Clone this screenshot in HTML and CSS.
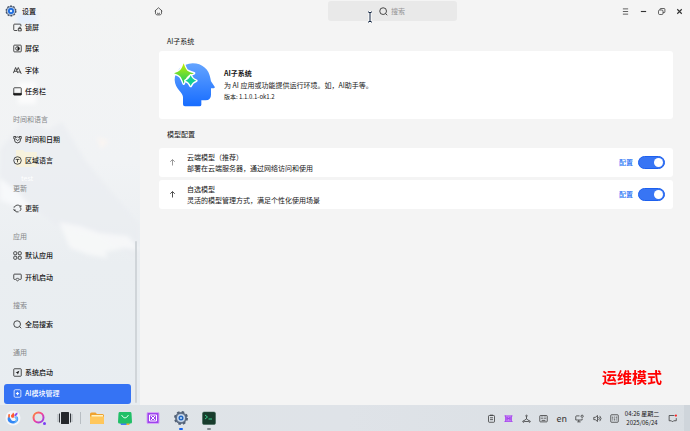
FILE: index.html
```html
<!DOCTYPE html>
<html lang="zh-CN">
<head>
<meta charset="utf-8">
<meta name="viewport" content="width=device-width, initial-scale=1">
<title>设置</title>
<link rel="stylesheet" href="styles.css">
</head>
<body>
<div class="window">
  <aside class="sidebar">
    <svg class="wallpaper" viewBox="0 0 140 405" preserveAspectRatio="none" aria-hidden="true">
      <defs><filter id="soft"><feGaussianBlur stdDeviation="2"/></filter></defs>
      <g filter="url(#soft)">
        <path d="M0 150L25 118L48 130L62 122L85 160L110 190L140 225V262L100 235L60 228L0 180Z" fill="#e9edf1" opacity=".7"/>
        <path d="M0 178L18 192L38 215L0 200Z" fill="#fbfcfd" opacity=".7"/>
        <path d="M59 222L80 226L100 233L128 236L140 250L125 248L105 252L108 258L90 255L70 248Z" fill="#f9fafa" opacity=".8"/>
        <path d="M18 82h18v22H18z" fill="#fff" opacity=".7"/>
        <path d="M17 12h20v12H17z" fill="#e4eefc"/>
        <path d="M97 137l12 4l-8 8z" fill="#faf5f2"/>
      </g>
      <path d="M16 150h7l2 2h12v15H16z" fill="#fbf3d5" opacity=".75"/>
    </svg>
    <header class="brand">
      <svg class="brand-icon" viewBox="0 0 24 24" aria-hidden="true"><circle cx="12" cy="12" r="9.500" fill="#56657a" stroke="#45536a" stroke-width="3" stroke-dasharray="3.700 2.270"/><circle cx="12" cy="12" r="8" fill="#b9cae1"/><circle cx="12" cy="12" r="6" fill="#1769e0"/><circle cx="12" cy="12" r="2.500" fill="#d9edff"/></svg>
      <h1>设置</h1>
    </header>
    <nav class="nav">
      <a class="item" href="#lock"><svg class="icon" viewBox="0 0 24 24"><path d="M11 20H4a2 2 0 0 1-2-2V5a2 2 0 0 1 2-2h15a2 2 0 0 1 2 2v4M14 15h8v6h-8zM16 15v-2a2 2 0 0 1 4 0v2"/></svg>锁屏</a>
      <a class="item" href="#saver"><svg class="icon" viewBox="0 0 24 24"><rect x="2" y="3" width="20" height="18" rx="2"/><circle cx="12" cy="12" r="5"/><path d="M12 7a5 5 0 0 1 0 10z" fill="currentColor" stroke="none"/></svg>屏保</a>
      <a class="item" href="#font"><svg class="icon" viewBox="0 0 24 24"><path d="M1 19L7 4l6 15M3 14h8M11 11l3-7l8 17M13 16h7"/></svg>字体</a>
      <a class="item" href="#taskbar"><svg class="icon" viewBox="0 0 24 24"><rect x="2" y="2" width="20" height="19" rx="2"/><path d="M2 17h20v4H2z" fill="currentColor"/></svg>任务栏</a>
      <h2 class="group">时间和语言</h2>
      <a class="item" href="#time"><svg class="icon" viewBox="0 0 24 24"><circle cx="12" cy="13" r="8"/><path d="M2 9V4h6M16 4h6v5M8 11l4 4l5-4M2 9l3 3M22 9l-3 3"/></svg>时间和日期</a>
      <a class="item" href="#region"><svg class="icon" viewBox="0 0 24 24"><circle cx="12" cy="12" r="10"/><path d="M7 9h10M12 9v8"/></svg>区域语言</a>
      <h2 class="group">更新</h2>
      <a class="item" href="#update"><svg class="icon" viewBox="0 0 24 24"><path d="M4 8a9 9 0 0 1 15-2M21 10a9 9 0 0 1-3 9M15 21a9 9 0 0 1-11-5M2 13l1 4l4-1M21 3v5h-4M3 10V7"/></svg>更新</a>
      <h2 class="group">应用</h2>
      <a class="item" href="#default"><svg class="icon" viewBox="0 0 24 24"><rect x="2" y="2" width="8" height="8" rx="2"/><rect x="14" y="2" width="8" height="8" rx="2"/><rect x="2" y="14" width="8" height="8" rx="2"/><rect x="14" y="14" width="8" height="8" rx="2"/></svg>默认应用</a>
      <a class="item" href="#startup"><svg class="icon" viewBox="0 0 24 24"><path d="M7 17H4a2 2 0 0 1-2-2V5a2 2 0 0 1 2-2h16a2 2 0 0 1 2 2v10a2 2 0 0 1-2 2h-3M7 17l5 4l5-4M9 16l3-3l3 3"/></svg>开机启动</a>
      <h2 class="group">搜索</h2>
      <a class="item" href="#search"><svg class="icon" viewBox="0 0 24 24"><circle cx="11" cy="11" r="9"/><path d="M18 18l4 4"/></svg>全局搜索</a>
      <h2 class="group">通用</h2>
      <a class="item" href="#boot"><svg class="icon" viewBox="0 0 24 24"><rect x="2" y="2" width="20" height="20" rx="2"/><path d="M7 12l10-5l-4 10l-2-4z" fill="currentColor" stroke="none"/></svg>系统启动</a>
      <a class="item active" href="#ai" aria-current="page"><svg class="icon" viewBox="0 0 24 24"><rect x="3" y="2" width="18" height="20" rx="3"/><path d="M12 7l2 3l3 2l-3 2l-2 3l-2-3l-3-2l3-2z" fill="currentColor" stroke="none"/></svg>AI模块管理</a>
    </nav>
    <span class="scrollbar"></span>
    <span class="desktop-label" aria-hidden="true">test</span>
  </aside>

  <main class="main">
    <header class="toolbar">
      <button class="tool" aria-label="主页"><svg class="icon" viewBox="0 0 24 24"><path d="M2 11L12 2l10 9M4 9v9l3 3h10l3-3V9M8 16q4 4 8 0"/></svg></button>
      <label class="search">
        <svg class="icon" viewBox="0 0 24 24"><circle cx="11" cy="11" r="9"/><path d="M18 18l4 4"/></svg>
        <input type="search" placeholder="搜索" aria-label="搜索">
      </label>
      <div class="controls">
        <button class="tool" aria-label="菜单"><svg class="icon" viewBox="0 0 24 24"><path d="M5 5h14M5 12h14M5 19h14"/></svg></button>
        <button class="tool" aria-label="最小化"><svg class="icon" viewBox="0 0 24 24"><path d="M5 12h14" stroke-width="3"/></svg></button>
        <button class="tool" aria-label="还原"><svg class="icon" viewBox="0 0 24 24"><rect x="4" y="8" width="12" height="12" rx="3"/><path d="M8 8V6a2 2 0 0 1 2-2h9a2 2 0 0 1 2 2v7a2 2 0 0 1-2 2h-3"/></svg></button>
        <button class="tool" aria-label="关闭"><svg class="icon" viewBox="0 0 24 24"><path d="M6 6l12 12M18 6L6 18" stroke-width="3"/></svg></button>
      </div>
    </header>
    <section class="section">
      <h2>AI子系统</h2>
      <div class="card intro">
        <svg class="head" viewBox="28 24 126 132" aria-hidden="true">
          <defs>
            <linearGradient id="blue" x1="0" y1="0" x2="0" y2="1"><stop offset="0" stop-color="#64a4ff"/><stop offset="1" stop-color="#176cff"/></linearGradient>
            <linearGradient id="green" x1="0" y1="0" x2="0" y2="1"><stop offset="0" stop-color="#c5ef00"/><stop offset="1" stop-color="#19ca61"/></linearGradient>
          </defs>
          <path d="M84 25C113 25 133 44 137 69L139 79L150 95Q152 99 147 100H139V119Q139 135 123 136H110V149Q110 154 104 154H61Q55 154 55 148V126C54 111 31 102 30 75C29 51 54 25 84 25Z" fill="url(#blue)"/>
          <path d="M57 25Q63 43 68 47Q72 50 88 55Q72 61 68 65Q63 69 57 86Q51 69 46 64Q42 60 28 55Q42 50 46 46Q51 42 57 25Z" fill="url(#green)" stroke="#fff" stroke-width="8" stroke-linejoin="round" paint-order="stroke"/>
          <path d="M78 61Q82 73 95 77Q82 81 78 93Q74 81 62 77Q74 73 78 61Z" fill="#16cf92" stroke="#fff" stroke-width="8" stroke-linejoin="round" paint-order="stroke"/>
        </svg>
        <div class="copy">
          <h3>AI子系统</h3>
          <p>为 AI 应用或功能提供运行环境。如，AI助手等。</p>
          <p class="version">版本: 1.1.0.1-ok1.2</p>
        </div>
      </div>
    </section>
    <section class="section">
      <h2>模型配置</h2>
      <div class="models">
        <div class="card model">
          <button class="arrow muted" aria-label="上移云端模型"><svg class="icon" viewBox="0 0 24 24"><path d="M12 20V5M6 10l6-6l6 6"/></svg></button>
          <div class="model-copy"><label for="cloud">云端模型（推荐）</label><p>部署在云端服务器，通过网络访问和使用</p></div>
          <a class="configure" href="#cloud-config">配置</a>
          <input class="switch" id="cloud" type="checkbox" role="switch" checked>
        </div>
        <div class="card model">
          <button class="arrow" aria-label="上移自选模型"><svg class="icon" viewBox="0 0 24 24"><path d="M12 20V5M6 10l6-6l6 6"/></svg></button>
          <div class="model-copy"><label for="custom">自选模型</label><p>灵活的模型管理方式，满足个性化使用场景</p></div>
          <a class="configure" href="#custom-config">配置</a>
          <input class="switch" id="custom" type="checkbox" role="switch" checked>
        </div>
      </div>
    </section>
  </main>
</div>

<footer class="taskbar">
  <div class="pinned">
    <button class="app" aria-label="开始"><svg viewBox="0 0 32 32"><circle cx="16" cy="16" r="15" fill="#f4f6f9"/><path d="M9 9C0 20 9 28 17 27C27 26 29 15 23 12C27 22 15 25 12 19C10 16 8 13 9 9Z" fill="#3287f5"/><path d="M23 12C28 18 24 26 17 27C24 22 22 18 18 14Z" fill="#70bdfb"/><path d="M13 15C10 9 15 10 16 5C21 10 18 12 17 16Z" fill="#ff5b2f"/><path d="M19 13C18 9 21 6 25 5C26 9 23 12 19 13Z" fill="#8c50ed"/><path d="M6 9l4-1v6l-3 2z" fill="#ff7040"/></svg></button>
    <button class="app" aria-label="搜索"><svg viewBox="0 0 32 32"><defs><linearGradient id="ring" x1="0" y1="0" x2="1" y2="1"><stop stop-color="#ff8d2c"/><stop offset=".5" stop-color="#f13e9d"/><stop offset="1" stop-color="#8641f6"/></linearGradient></defs><circle cx="15" cy="15" r="10" fill="none" stroke="url(#ring)" stroke-width="4"/><circle cx="27" cy="27" r="3" fill="#7b3df5"/></svg></button>
    <button class="app" aria-label="多任务"><svg viewBox="0 0 32 32"><rect x="8" y="4" width="16" height="24" rx="1" fill="#24282c"/><path d="M5 7v18M27 7v18" stroke="#30353a" stroke-width="2"/><path d="M2 8v16M30 8v16" stroke="#7b8085" stroke-width="1"/></svg></button>
  </div>
  <span class="divider"></span>
  <div class="pinned apps">
    <button class="app" aria-label="文件管理"><svg viewBox="0 0 32 32"><path d="M2 8q0-3 3-3h8l3 3h11q3 0 3 3v15q0 2-2 2H4q-2 0-2-2z" fill="#efa22e"/><path d="M5 10h23v7H5z" fill="#fff2c3"/><path d="M2 13h28v13q0 2-2 2H4q-2 0-2-2z" fill="#ffc75b"/></svg></button>
    <button class="app" aria-label="软件商店"><svg viewBox="0 0 32 32"><path d="M6 25h20l-2 5H8z" fill="#487df7"/><path d="M19 25h7l-2 5h-5z" fill="#ffb22e"/><path d="M5 4h22q2 0 2 3l1 17q0 3-3 3H5q-3 0-3-3L3 7q0-3 2-3z" fill="#20bf67"/><path d="M9 10q7 12 14 0" fill="none" stroke="#dcffe8" stroke-width="2"/></svg></button>
    <button class="app" aria-label="截图"><svg viewBox="0 0 32 32"><rect x="4" y="5" width="24" height="22" rx="2" fill="#9d43ed" stroke="#d6a4f7" stroke-width="2"/><path d="M9 10h14v12H9zM12 12l8 8M20 12l-8 8" fill="none" stroke="#fff" stroke-width="2"/></svg></button>
    <button class="app running current" aria-label="设置"><svg viewBox="0 0 32 32"><circle cx="16" cy="16" r="12" fill="#64748a" stroke="#536175" stroke-width="4" stroke-dasharray="5 4.420"/><circle cx="16" cy="16" r="8" fill="#c8d8ea"/><circle cx="16" cy="16" r="5" fill="#2166c4"/><circle cx="16" cy="16" r="2" fill="#bfe3ff"/></svg></button>
    <button class="app running" aria-label="终端"><svg viewBox="0 0 32 32"><rect x="3" y="4" width="26" height="25" rx="3" fill="#183c2c" stroke="#315a48"/><path d="M8 10l5 4l-5 4M15 18h7" fill="none" stroke="#39d08c" stroke-width="2"/></svg></button>
  </div>
  <div class="tray">
    <button class="tool" aria-label="剪贴板"><svg class="icon" viewBox="0 0 24 24"><rect x="4" y="4" width="16" height="18" rx="2"/><path d="M8 3h8M8 10h8M8 15h8"/></svg></button>
    <button class="tool" aria-label="截图工具"><svg class="icon" viewBox="0 0 24 24"><rect x="4" y="5" width="16" height="15" fill="#c783f7" stroke="#a43eed"/><path d="M8 17V9l4 4l4-4v8" stroke="#8b1ce0"/><path d="M1 5h4M19 5h4M1 20h4M19 20h4" stroke="#a43eed"/></svg></button>
    <button class="tool" aria-label="共享"><svg class="icon" viewBox="0 0 24 24"><circle cx="12" cy="5" r="2"/><circle cx="4" cy="20" r="2"/><circle cx="20" cy="20" r="2"/><path d="M12 7v6L5 18M12 13l7 5M7 20h10"/></svg></button>
    <button class="tool" aria-label="键盘"><svg class="icon" viewBox="0 0 24 24"><rect x="2" y="4" width="20" height="17" rx="2"/><path d="M5 8h14M5 12h14" stroke-dasharray="2 2"/><path d="M7 17h10"/></svg></button>
    <button class="language">en</button>
    <button class="tool" aria-label="网络"><svg class="icon" viewBox="0 0 24 24"><path d="M12 5H4a2 2 0 0 0-2 2v9h17v-4M10 16v5M6 21h9"/><circle cx="19" cy="6" r="3"/></svg></button>
    <button class="tool" aria-label="音量"><svg class="icon" viewBox="0 0 24 24"><path d="M2 9h4l6-5v16l-6-5H2zM15 8q4 4 0 8M18 5q7 7 0 14"/></svg></button>
    <button class="tool" aria-label="控制中心"><svg class="icon" viewBox="0 0 24 24"><rect x="2" y="2" width="20" height="20" rx="2"/><path d="M7 6v12M12 6v12M17 6v12M5 10h4M10 15h4M15 9h4" stroke-width="1"/></svg></button>
  </div>
  <time class="clock" datetime="2025-06-24T04:26"><span>04:26 星期二</span><span>2025/06/24</span></time>
  <button class="tool notice" aria-label="通知"><svg class="icon" viewBox="0 0 24 24"><path d="M17 4H3v14h6l3 3l3-3h7v-7"/><circle cx="21" cy="4" r="3" fill="#f22" stroke="none"/></svg></button>
  <button class="show-desktop" aria-label="显示桌面"></button>
</footer>
<strong class="mode">运维模式</strong>
<svg class="cursor" viewBox="0 0 8 12" aria-hidden="true"><path d="M2 1h1l1 1l1-1h1M4 2v8M2 11h1l1-1l1 1h1" fill="none" stroke="#fff" stroke-width="3"/><path d="M2 1h1l1 1l1-1h1M4 2v8M2 11h1l1-1l1 1h1" fill="none" stroke="#10233f"/></svg>
</body>
</html>
```

FILE: styles.css
```css
* { box-sizing: border-box; }
body {
  margin: 0;
  min-height: 100vh;
  display: flex;
  flex-direction: column;
  color: #161616;
  background: #f4f4f4;
  font: 7px/11px "Noto Sans CJK SC", "Noto Sans", sans-serif;
}
h1, h2, h3, p { margin: 0; font-size: inherit; font-weight: 400; }
button { padding: 0; border: 0; background: none; color: inherit; font: inherit; }
a { color: inherit; text-decoration: none; }
.icon {
  display: block;
  flex: none;
  width: 9px;
  height: 9px;
  fill: none;
  stroke: currentColor;
  stroke-width: 2;
}
.window { flex: 1; display: flex; }

.sidebar {
  position: relative;
  width: 140px;
  flex: none;
  display: flex;
  flex-direction: column;
  background: linear-gradient(#f3f4f4, #f1f3f5 40%, #eaeef1 65%, #e8edf1);
}
.wallpaper { position: absolute; inset: 0; width: 100%; height: 100%; }
.brand { position: relative; display: flex; align-items: center; gap: 5px; height: 17px; padding: 5px 5px 0; }
.brand-icon { width: 12px; height: 12px; }
.brand h1 { font-weight: 500; }
.nav { position: relative; flex: 1; display: flex; flex-direction: column; padding: 0 9px 0 4px; }
.item {
  flex: 41 1 11px;
  flex-basis: 0;
  display: flex;
  align-items: center;
  gap: 3px;
  margin-bottom: 1px;
  padding-left: 9px;
  border-radius: 3px;
  font-weight: 500;
}
.group { flex: 38 1 0; display: flex; align-items: center; padding: 7px 9px 0; color: #858789; }
.active { color: #fff; background: #3573f4; }
.scrollbar { position: absolute; right: 3px; top: 241px; bottom: 2px; width: 2px; border-radius: 1px; background: #d0d5d9; }
.desktop-label { position: absolute; left: 21px; top: 174px; color: #fff; line-height: 8px; }

.main { flex: 1; min-width: 0; }
.toolbar { display: flex; align-items: center; height: 22px; padding: 0 6px 0 14px; }
.tool { flex: none; color: #333; }
.search {
  display: flex;
  align-items: center;
  gap: 3px;
  width: 129px;
  height: 20px;
  margin-left: 165px;
  padding-left: 51px;
  border-radius: 3px;
  background: #e9e9e9;
}
.search input { flex: 1; min-width: 0; padding: 0; border: 0; outline: 0; background: none; font: inherit; }
.search input::placeholder { color: #969696; opacity: 1; }
.controls { display: flex; gap: 9px; margin-left: auto; }
.section { padding: 13px 17px 0 19px; }
.section h2 { padding: 0 8px; line-height: 12px; margin-bottom: 4px; }
.section + .section { padding-top: 9px; }
.section + .section h2 { margin-bottom: 8px; }
.card { border-radius: 3px; background: #fff; }
.intro { display: flex; align-items: center; gap: 8px; height: 68px; padding: 0 15px; }
.head { width: 42px; height: 44px; overflow: visible; }
.copy { line-height: 12px; }
.copy h3 { font-weight: 700; }
.version { font-size: 6px; }
.models { display: grid; gap: 3px; }
.model { display: flex; align-items: center; min-height: 29px; padding: 0 8px 0 9px; }
.arrow { width: 9px; margin-right: 10px; }
.muted { color: #777; }
.model-copy { flex: 1; }
.model-copy label { display: block; }
.configure { color: #2872f5; font-weight: 500; }
.switch {
  appearance: none;
  display: flex;
  justify-content: flex-end;
  width: 27px;
  height: 13px;
  margin: 0 0 0 5px;
  padding: 1px;
  border: 1px solid #1d60ee;
  border-radius: 7px;
  background: #3875f4;
}
.switch::before { content: ""; width: 9px; height: 9px; border-radius: 50%; background: #fff; }
.switch:not(:checked) { justify-content: flex-start; border-color: #aaa; background: #bbb; }

.taskbar { display: flex; align-items: center; height: 26px; padding-left: 5px; background: linear-gradient(90deg, #dfe4e7, #dfe3e8 50%, #d9dee3); }
.pinned { display: flex; gap: 10px; }
.apps { gap: 12px; }
.app { position: relative; width: 16px; height: 16px; }
.app svg { display: block; width: 16px; height: 16px; overflow: visible; }
.running::after { content: ""; position: absolute; left: 6px; bottom: -4px; width: 4px; height: 2px; border-radius: 1px; background: #858b90; }
.current::after { background: #1763ef; }
.divider { width: 1px; height: 12px; margin: 0 8px 0 7px; background: #b8bec3; }
.tray { display: flex; align-items: center; justify-content: space-between; width: 132px; margin-left: auto; color: #333; }
.language { font-size: 9px; }
.clock { display: flex; flex-direction: column; width: 36px; margin: 0 8px 0 5px; font-size: 6px; line-height: 9px; text-align: center; white-space: nowrap; }
.show-desktop { align-self: stretch; width: 6px; margin-left: 7px; background: #cfd5db; }
.mode { position: fixed; right: 28px; bottom: 43px; color: #f00; font-size: 15px; line-height: 22px; }
.cursor { position: absolute; left: 366px; top: 11px; width: 8px; height: 12px; }
```
